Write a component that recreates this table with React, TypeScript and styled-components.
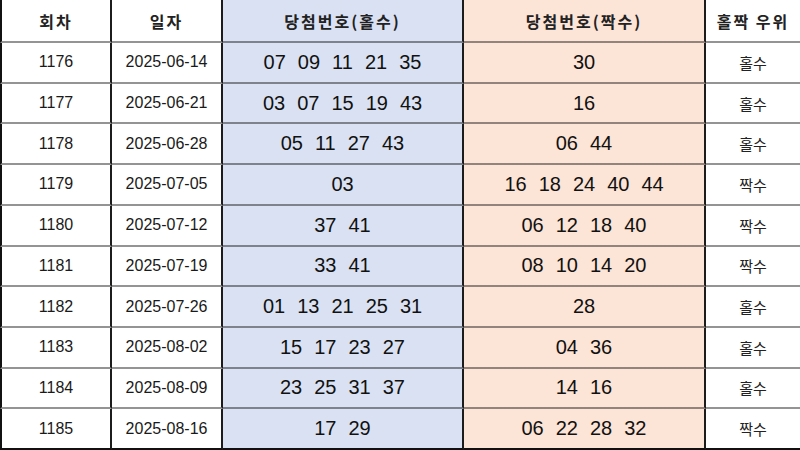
import React from "react";
import styled, { createGlobalStyle } from "styled-components";

const Global = createGlobalStyle`
  html, body { margin: 0; padding: 0; background: #ffffff; }
  body { font-family: "Liberation Sans", Arial, "Noto Sans CJK KR", sans-serif; }
`;

type Kind = "plain" | "odd" | "even";

const Table = styled.div`
  width: 800px;
  height: 450px;
  display: grid;
  grid-template-columns: 112px 111px 241px 242px 94px;
  grid-template-rows: 43px repeat(10, 1fr);
  background: #ffffff;
  overflow: hidden;
`;

const bgOf = (k: Kind) => (k === "odd" ? "#d9e1f2" : k === "even" ? "#fce4d6" : "#ffffff");

const Cell = styled.div<{ $kind: Kind; $first?: boolean; $last?: boolean; $lastRow?: boolean }>`
  box-sizing: border-box;
  display: flex;
  align-items: center;
  justify-content: center;
  background: ${(p) => bgOf(p.$kind)};
  border-left: ${(p) => (p.$first ? "2px solid #111" : "none")};
  border-right: ${(p) => (p.$last ? "none" : "2px solid #1c1c1c")};
  border-bottom: ${(p) => (p.$lastRow ? "2px solid #111" : "2px solid rgba(0,0,0,0.42)")};
  color: #1a1a1a;
  white-space: nowrap;
`;

const HeadText = styled.span`
  font-family: "Noto Sans CJK KR", "Liberation Sans", sans-serif;
  font-size: 16px;
  font-weight: 700;
  letter-spacing: 2px;
  color: #222;
`;

const SmallText = styled.span`
  font-family: "Liberation Sans", Arial, sans-serif;
  font-size: 16px;
  color: #1a1a1a;
`;

const KorText = styled.span`
  font-family: "Noto Sans CJK KR", sans-serif;
  font-size: 15px;
  font-weight: 400;
  color: #222;
`;

const Numbers = styled.div`
  display: flex;
  gap: 12px;
  font-family: "Liberation Sans", Arial, sans-serif;
  font-size: 20px;
  color: #111;
`;

type Row = { no: string; date: string; odd: string[]; even: string[]; win: string };

const rows: Row[] = [
  { no: "1176", date: "2025-06-14", odd: ["07", "09", "11", "21", "35"], even: ["30"], win: "홀수" },
  { no: "1177", date: "2025-06-21", odd: ["03", "07", "15", "19", "43"], even: ["16"], win: "홀수" },
  { no: "1178", date: "2025-06-28", odd: ["05", "11", "27", "43"], even: ["06", "44"], win: "홀수" },
  { no: "1179", date: "2025-07-05", odd: ["03"], even: ["16", "18", "24", "40", "44"], win: "짝수" },
  { no: "1180", date: "2025-07-12", odd: ["37", "41"], even: ["06", "12", "18", "40"], win: "짝수" },
  { no: "1181", date: "2025-07-19", odd: ["33", "41"], even: ["08", "10", "14", "20"], win: "짝수" },
  { no: "1182", date: "2025-07-26", odd: ["01", "13", "21", "25", "31"], even: ["28"], win: "홀수" },
  { no: "1183", date: "2025-08-02", odd: ["15", "17", "23", "27"], even: ["04", "36"], win: "홀수" },
  { no: "1184", date: "2025-08-09", odd: ["23", "25", "31", "37"], even: ["14", "16"], win: "홀수" },
  { no: "1185", date: "2025-08-16", odd: ["17", "29"], even: ["06", "22", "28", "32"], win: "짝수" },
];

const NumberList = ({ values }: { values: string[] }) => (
  <Numbers>
    {values.map((v, i) => (
      <span key={i}>{v}</span>
    ))}
  </Numbers>
);

export default function App() {
  return (
    <>
      <Global />
      <Table>
        <Cell $kind="plain" $first>
          <HeadText>회차</HeadText>
        </Cell>
        <Cell $kind="plain">
          <HeadText>일자</HeadText>
        </Cell>
        <Cell $kind="odd">
          <HeadText>당첨번호(홀수)</HeadText>
        </Cell>
        <Cell $kind="even">
          <HeadText>당첨번호(짝수)</HeadText>
        </Cell>
        <Cell $kind="plain" $last>
          <HeadText>홀짝 우위</HeadText>
        </Cell>
        {rows.map((r, i) => {
          const lastRow = i === rows.length - 1;
          return (
            <React.Fragment key={r.no}>
              <Cell $kind="plain" $first $lastRow={lastRow}>
                <SmallText>{r.no}</SmallText>
              </Cell>
              <Cell $kind="plain" $lastRow={lastRow}>
                <SmallText>{r.date}</SmallText>
              </Cell>
              <Cell $kind="odd" $lastRow={lastRow}>
                <NumberList values={r.odd} />
              </Cell>
              <Cell $kind="even" $lastRow={lastRow}>
                <NumberList values={r.even} />
              </Cell>
              <Cell $kind="plain" $last $lastRow={lastRow}>
                <KorText>{r.win}</KorText>
              </Cell>
            </React.Fragment>
          );
        })}
      </Table>
    </>
  );
}
